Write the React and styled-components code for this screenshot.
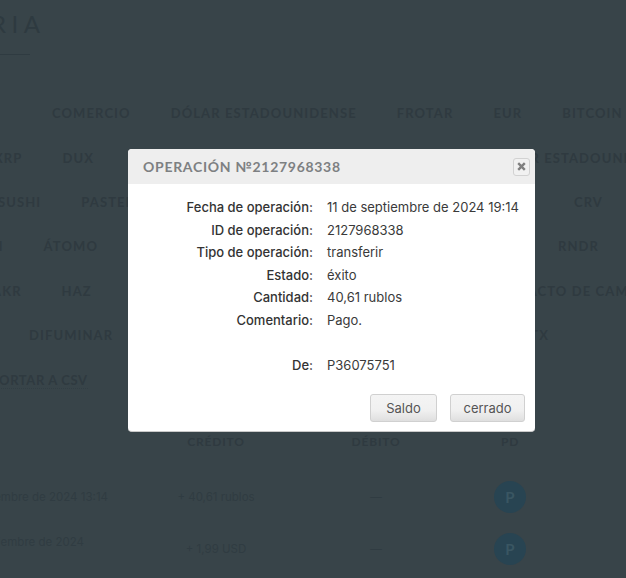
import React from "react";
import styled, { createGlobalStyle } from "styled-components";

const Global = createGlobalStyle`
  html, body { margin: 0; padding: 0; background: #384449; }
  body { font-family: "Inter", "Liberation Sans", sans-serif; }
`;

const Page = styled.div`
  position: relative;
  width: 626px;
  height: 578px;
  overflow: hidden;
  background: #384449;
  color: #2f3a40;
`;

const Logo = styled.div`
  height: 54px;
  width: 30px;
  border-bottom: 1px solid #2f3b41;
  box-sizing: content-box;
`;

const LogoText = styled.div`
  font: 400 24px/24px "Lato", sans-serif;
  letter-spacing: 5.5px;
  padding-top: 12px;
  margin-left: -9px;
  white-space: nowrap;
  color: #2e3a40;
`;

const Nav = styled.nav`
  display: flex;
  flex-direction: column;
  margin-top: 36px;
`;

const NavRow = styled.div`
  display: flex;
  justify-content: space-between;
  height: 44.4px;
  align-items: center;
  margin-left: ${(p) => p.$left || 0}px;
  margin-right: ${(p) => p.$right || 0}px;
`;

const NavGroup = styled.div`
  display: flex;
  gap: 40px;
`;

const NavItem = styled.span`
  font: 700 13px/16px "Lato", sans-serif;
  letter-spacing: 1.1px;
  white-space: nowrap;
`;

const Export = styled.div`
  font: 700 13px/16px "Lato", sans-serif;
  letter-spacing: 0.6px;
  margin: 15px 0 0 -27px;
  white-space: nowrap;
  width: max-content;
  border-bottom: 1px dotted #323e44;
`;

const Table = styled.div`
  display: grid;
  grid-template-columns: 136px 160px 160px 108px;
  margin-top: 45px;
`;

const Head = styled.div`
  font: 700 12px/16px "Lato", sans-serif;
  letter-spacing: 0.8px;
  text-align: center;
  height: 37px;
`;

const Cell = styled.div`
  height: 51.5px;
  display: flex;
  align-items: center;
  justify-content: center;
  font: 400 11.5px/16px "Inter", sans-serif;
  white-space: nowrap;
  color: #303c42;
  box-sizing: border-box;
`;

const DateCell = styled(Cell)`
  justify-content: flex-end;
  padding-right: ${(p) => p.$pad}px;
  padding-bottom: ${(p) => p.$raise || 0}px;
`;

const Circle = styled.div`
  width: 32px;
  height: 32px;
  border-radius: 50%;
  background: #284452;
  color: #3a5662;
  font: 700 15px/32px "Lato", sans-serif;
  text-align: center;
`;

const Modal = styled.section`
  position: absolute;
  left: 128px;
  top: 149px;
  width: 407px;
  height: 283px;
  box-sizing: border-box;
  background: #fff;
  border-radius: 4px;
  border-bottom: 1px solid #c9c9c9;
  overflow: hidden;
  display: flex;
  flex-direction: column;
`;

const ModalHeader = styled.header`
  height: 35px;
  flex: none;
  background: #eeeeee;
  display: flex;
  align-items: center;
  justify-content: space-between;
  padding: 0 5px 0 15px;
`;

const ModalTitle = styled.h2`
  margin: 0;
  font: 700 14px/18px "Lato", sans-serif;
  letter-spacing: 0.7px;
  color: #7d8082;
  white-space: nowrap;
`;

const CloseButton = styled.button`
  width: 17px;
  height: 18px;
  padding: 0;
  box-sizing: border-box;
  background: #f1f1f1;
  border: 1px solid #d2d2d2;
  border-radius: 3px;
  display: flex;
  align-items: center;
  justify-content: center;
`;

const Details = styled.dl`
  margin: 12px 0 0;
  display: grid;
  grid-template-columns: 185px 1fr;
  column-gap: 14px;
  grid-auto-rows: 22.5px;
  align-items: center;
  font: 400 13px/22.5px "Inter", sans-serif;
`;

const Label = styled.dt`
  text-align: right;
  color: #333;
  font-weight: 500;
  white-space: nowrap;
`;

const Value = styled.dd`
  margin: 0;
  color: #3a3a3a;
  white-space: nowrap;
`;

const Spacer = styled.div`
  grid-column: 1 / -1;
`;

const Actions = styled.div`
  margin-top: auto;
  display: flex;
  justify-content: flex-end;
  gap: 13px;
  padding: 0 10px 9px 0;
`;

const ActionButton = styled.button`
  width: ${(p) => p.$w}px;
  height: 28px;
  padding: 0;
  box-sizing: border-box;
  border: 1px solid #d0d0d0;
  border-radius: 3px;
  background: linear-gradient(#f4f4f4, #f0f0f0 60%, #dfdfdf);
  color: #555;
  font: 400 13px/26px "Inter", sans-serif;
`;

const rows = [
  { left: 52, right: 9, a: ["COMERCIO", "DÓLAR ESTADOUNIDENSE", "FROTAR", "EUR", "BITCOIN"], b: [] },
  { left: -6, right: -50, a: ["XRP", "DUX"], b: ["DÓLAR ESTADOUNIDENSE"] },
  { left: -2, right: 23, a: ["SUSHI", "PASTEL"], b: ["CRV"] },
  { left: -25, right: 27, a: ["ETH", "ÁTOMO"], b: ["RNDR"] },
  { left: -8, right: -29, a: ["AKR", "HAZ"], b: ["CONTACTO DE CAMBIO"] },
  { left: 29, right: 77, a: ["DIFUMINAR"], b: ["TX"] },
];

export default function App() {
  return (
    <Page>
      <Global />
      <Logo>
        <LogoText>RIA</LogoText>
      </Logo>
      <Nav>
        {rows.map((r, i) => (
          <NavRow key={i} $left={r.left} $right={r.right}>
            <NavGroup>
              {r.a.map((t) => (
                <NavItem key={t}>{t}</NavItem>
              ))}
            </NavGroup>
            <NavGroup>
              {r.b.map((t) => (
                <NavItem key={t}>{t}</NavItem>
              ))}
            </NavGroup>
          </NavRow>
        ))}
      </Nav>
      <Export>EXPORTAR A CSV</Export>
      <Table>
        <Head />
        <Head>CRÉDITO</Head>
        <Head>DÉBITO</Head>
        <Head>PD</Head>
        <DateCell $pad={28}>septiembre de 2024 13:14</DateCell>
        <Cell>+ 40,61 rublos</Cell>
        <Cell>—</Cell>
        <Cell><Circle>P</Circle></Cell>
        <DateCell $pad={52} $raise={14}>septiembre de 2024</DateCell>
        <Cell>+ 1,99 USD</Cell>
        <Cell>—</Cell>
        <Cell><Circle>P</Circle></Cell>
      </Table>
      <Modal>
        <ModalHeader>
          <ModalTitle>OPERACIÓN №2127968338</ModalTitle>
          <CloseButton aria-label="Cerrar">
            <svg width="9" height="9" viewBox="0 0 9 9">
              <path d="M1.2 1.2 7.8 7.8M7.8 1.2 1.2 7.8" stroke="#808080" strokeWidth="2.4" />
            </svg>
          </CloseButton>
        </ModalHeader>
        <Details>
          <Label>Fecha de operación:</Label><Value>11 de septiembre de 2024 19:14</Value>
          <Label>ID de operación:</Label><Value>2127968338</Value>
          <Label>Tipo de operación:</Label><Value>transferir</Value>
          <Label>Estado:</Label><Value>éxito</Value>
          <Label>Cantidad:</Label><Value>40,61 rublos</Value>
          <Label>Comentario:</Label><Value>Pago.</Value>
          <Spacer />
          <Label>De:</Label><Value>P36075751</Value>
        </Details>
        <Actions>
          <ActionButton $w={67}>Saldo</ActionButton>
          <ActionButton $w={75}>cerrado</ActionButton>
        </Actions>
      </Modal>
    </Page>
  );
}
